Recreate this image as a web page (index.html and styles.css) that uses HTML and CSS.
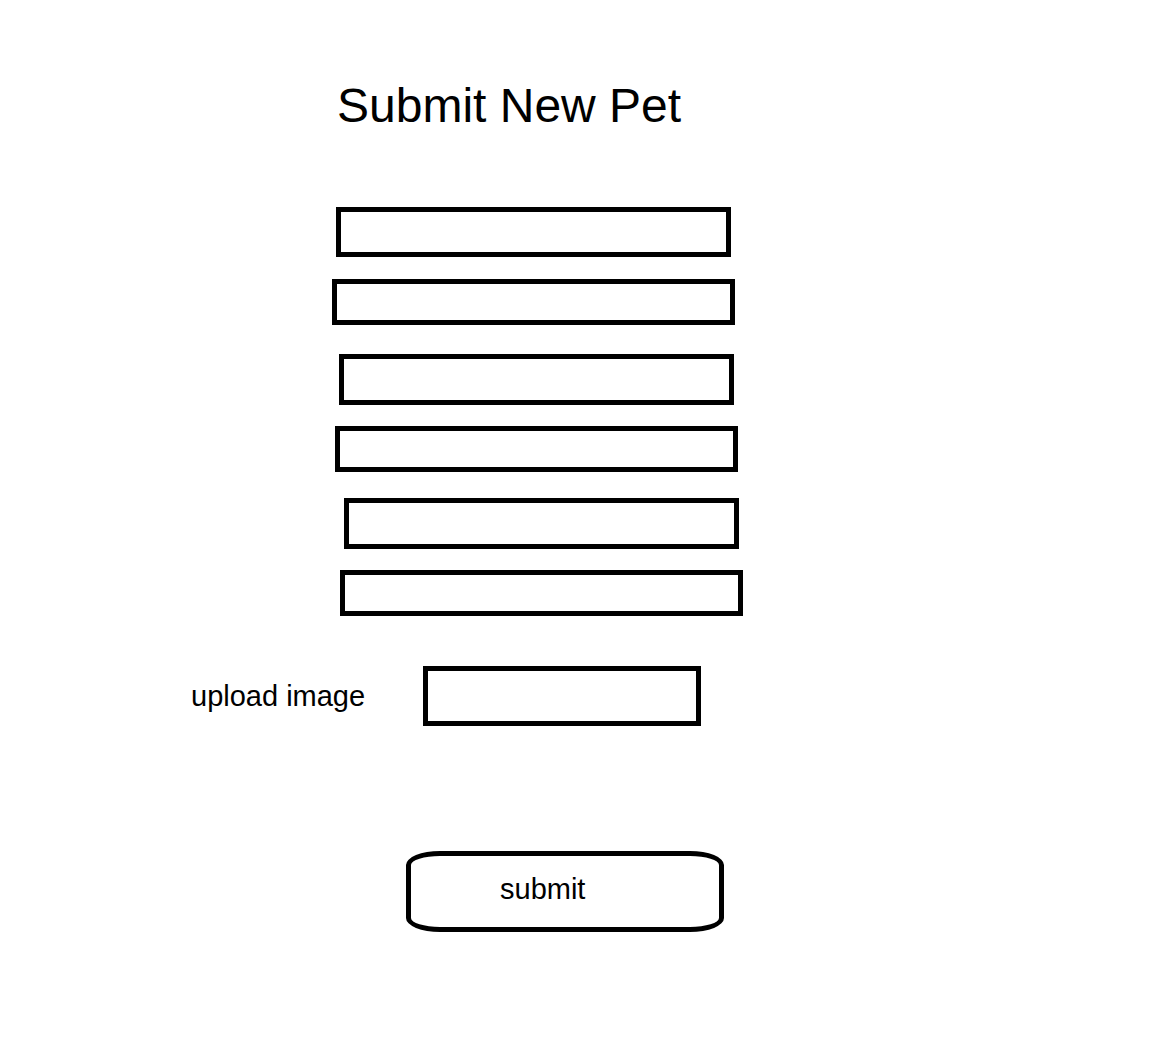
FILE: index.html
```html
<!DOCTYPE html>
<html lang="en">
<head>
<meta charset="utf-8">
<title>Submit New Pet</title>
<link rel="stylesheet" href="styles.css">
</head>
<body>
<main class="page">
  <h1 class="title">Submit New Pet</h1>
  <form class="form">
    <input class="field f1" type="text" aria-label="field 1">
    <input class="field f2" type="text" aria-label="field 2">
    <input class="field f3" type="text" aria-label="field 3">
    <input class="field f4" type="text" aria-label="field 4">
    <input class="field f5" type="text" aria-label="field 5">
    <input class="field f6" type="text" aria-label="field 6">
    <div class="upload-row">
      <span class="upload-label">upload image</span>
      <div class="upload-box"></div>
    </div>
    <button class="submit" type="button">submit</button>
  </form>
</main>
</body>
</html>
```
FILE: styles.css
```css
html, body {
  margin: 0;
  padding: 0;
  background: #fff;
}
body {
  font-family: "Liberation Sans", Arial, sans-serif;
  color: #000;
}
.page {
  padding-top: 82px;
}
.title {
  margin: 0 0 0 337px;
  font-size: 48px;
  line-height: 48px;
  font-weight: normal;
}
.form {
  display: flex;
  flex-direction: column;
  align-items: flex-start;
}
.field {
  display: block;
  box-sizing: border-box;
  border: 5px solid #000;
  border-radius: 0;
  padding: 0;
  margin: 0;
  background: #fff;
  outline: none;
}
.f1 { margin: 77px 0 0 336px; width: 395px; height: 50px; }
.f2 { margin: 22px 0 0 332px; width: 403px; height: 46px; }
.f3 { margin: 29px 0 0 339px; width: 395px; height: 51px; }
.f4 { margin: 21px 0 0 335px; width: 403px; height: 46px; }
.f5 { margin: 26px 0 0 344px; width: 395px; height: 51px; }
.f6 { margin: 21px 0 0 340px; width: 403px; height: 46px; }
.upload-row {
  display: flex;
  align-items: center;
  margin-top: 50px;
}
.upload-label {
  width: 232px;
  margin-left: 191px;
  font-size: 29px;
  line-height: 29px;
}
.upload-box {
  box-sizing: border-box;
  width: 278px;
  height: 60px;
  border: 5px solid #000;
}
.submit {
  box-sizing: border-box;
  margin: 125px 0 0 406px;
  width: 318px;
  height: 81px;
  border: 5px solid #000;
  border-radius: 34px / 14px;
  background: #fff;
  padding: 0 0 5px 89px;
  text-align: left;
  display: block;
  font-family: "Liberation Sans", Arial, sans-serif;
  font-size: 29px;
  line-height: 29px;
  color: #000;
}
```
